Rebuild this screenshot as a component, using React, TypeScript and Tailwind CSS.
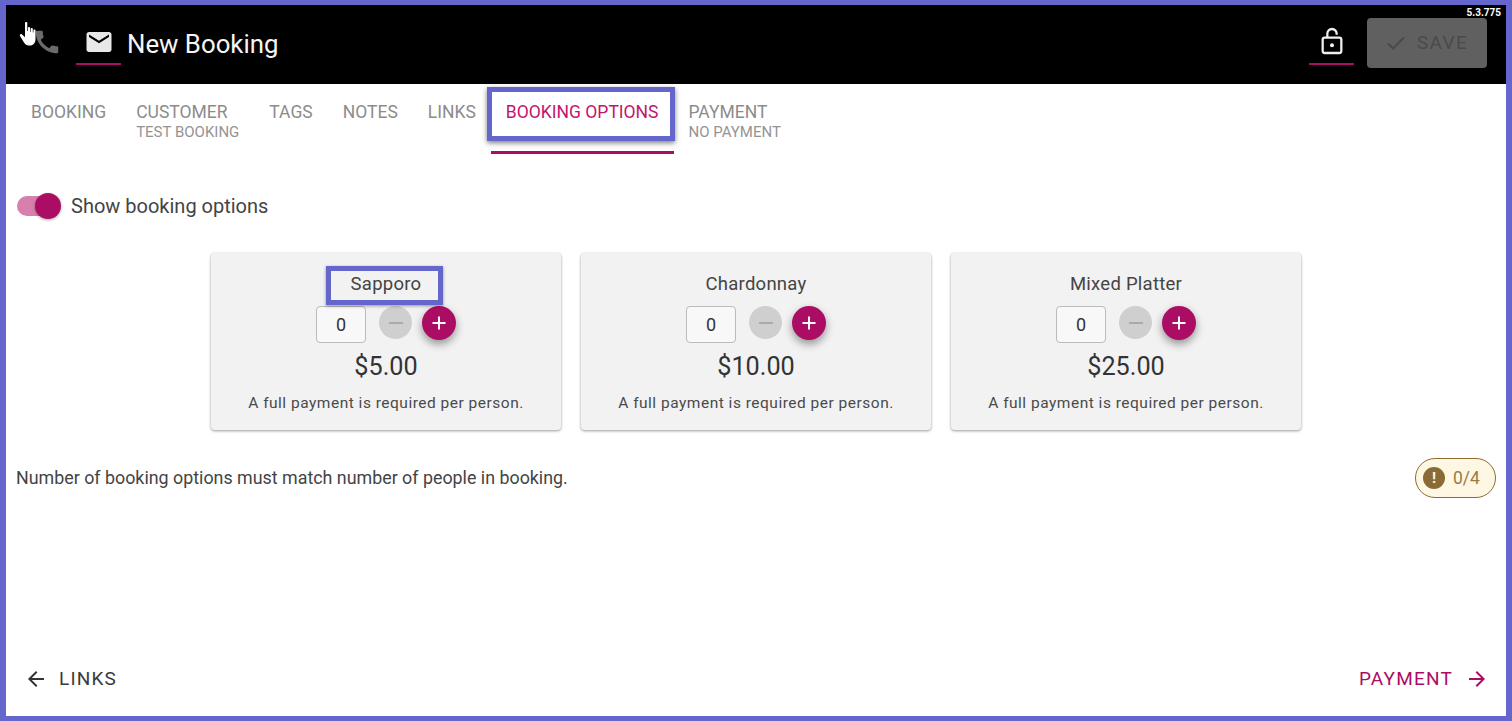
const options = [
  { name: "Sapporo", price: "$5.00", marked: true },
  { name: "Chardonnay", price: "$10.00", marked: false },
  { name: "Mixed Platter", price: "$25.00", marked: false },
];

const tabs = [
  { label: "BOOKING" },
  { label: "CUSTOMER", sub: "TEST BOOKING" },
  { label: "TAGS" },
  { label: "NOTES" },
  { label: "LINKS" },
  { label: "BOOKING OPTIONS", active: true },
  { label: "PAYMENT", sub: "NO PAYMENT" },
];

const OptionCard = ({ name, price, marked }: { name: string; price: string; marked: boolean }) => (
  <div className="w-[350px] h-[177px] bg-[#f2f2f2] rounded-[4px] shadow-[0_1px_3px_rgba(0,0,0,0.4)] flex flex-col items-center pt-[18px]">
    <div className="relative mt-[1px] text-[18.500px] leading-[24px] text-[#444] tracking-[0.25px]">
      {name}
      {marked && (
        <div className="absolute left-[-25px] right-[-22px] top-[-6px] bottom-[-9px] border-[5px] border-[#6466cc] shadow-[0_1px_3px_rgba(0,0,0,0.4)]" />
      )}
    </div>
    <div className="flex items-center mt-[9px] h-[38px]">
      <div className="w-[50px] h-[37px] bg-[#f8f8f8] border border-[#bbb] rounded-[4px] flex items-center justify-center text-[18px] text-[#333]">
        0
      </div>
      <div className="ml-[13px] w-[33px] h-[33px] rounded-full bg-[#cfcfcf] flex items-center justify-center mb-[3px]">
        <div className="w-[14px] h-[2px] bg-[#aaa]" />
      </div>
      <div className="ml-[10px] w-[34px] h-[34px] rounded-full bg-[#ab0d65] shadow-[0_4px_8px_rgba(0,0,0,0.4)] flex items-center justify-center mb-[3px]">
        <svg width="16" height="16" viewBox="0 0 16 16" fill="none" stroke="white" strokeWidth="2">
          <path d="M8 1.500v13M1.500 8h13" />
        </svg>
      </div>
    </div>
    <div className="mt-[7px] text-[25.200px] leading-[34px] text-[#333]">{price}</div>
    <div className="mt-[9px] text-[15.500px] leading-[20px] text-[#4a4a4a] tracking-[0.5px]">
      A full payment is required per person.
    </div>
  </div>
);

export default function App() {
  return (
    <div className="w-[1512px] h-[721px] border-x-[6px] border-y-[5px] border-[#6466cc] bg-white flex flex-col font-['Roboto',sans-serif] overflow-hidden">
      {/* header */}
      <div className="relative h-[79px] shrink-0 bg-black flex items-center">
        <div className="relative ml-[26px] mt-[-5px] w-[30px] h-[30px]">
          <svg width="30" height="30" viewBox="0 0 24 24" fill="#6b6b6b">
            <path d="M20.010 15.380c-1.230 0-2.420-.2-3.530-.56a.98.98 0 0 0-1.010.24l-1.570 1.970c-2.830-1.350-5.480-3.900-6.890-6.830l1.950-1.660c.27-.28.35-.67.24-1.020-.37-1.110-.56-2.300-.56-3.530 0-.54-.45-.99-.99-.99H4.190C3.650 3 3 3.240 3 3.990 3 13.280 10.730 21 20.010 21c.71 0 .99-.63.99-1.180v-3.450c0-.54-.45-.99-.99-.99z" />
          </svg>
          <svg className="absolute left-[-13px] top-[-6px]" width="22" height="26" viewBox="0 0 22 26" fill="white">
            <path d="M6 2c0-1.300 2.300-1.300 2.300 0v8h.7V7c0-1.200 2.100-1.200 2.100 0v4h.6V8c0-1.200 2.100-1.200 2.100 0v3.500h.6V9.500c0-1.200 2.100-1.200 2.100 0V18c0 4-2.300 6.500-5.500 6.500H10c-2.500 0-3.700-1.300-5-3L1 15c-.8-1.300.8-2.700 2-1.600l3 2.800z" />
          </svg>
        </div>
        <div className="relative ml-[14px] mt-[-4px] w-[45px] flex justify-center">
          <svg className="mt-[-1px]" width="30" height="30" viewBox="0 0 24 24" fill="#e8e8e8">
            <path d="M20 4H4c-1.100 0-2 .9-2 2v12c0 1.100.9 2 2 2h16c1.100 0 2-.9 2-2V6c0-1.100-.9-2-2-2zm0 4-8 5-8-5V6l8 5 8-5v2z" />
          </svg>
          <div className="absolute left-0 right-0 top-[35px] h-[2px] bg-[#ab0d65]" />
        </div>
        <div className="ml-[6px] text-[25.800px] text-[#f5f5f5] leading-none">New Booking</div>
        <div className="relative ml-auto mt-[-4px] w-[45px] flex justify-center">
          <svg className="ml-[1px] mt-[-3px]" width="32" height="32" viewBox="0 0 24 24" fill="none" stroke="#f0f0f0" strokeWidth="1.700">
            <rect x="5" y="9.500" width="14" height="11.500" rx="1.500" />
            <path d="M8.500 9.500V6.500a3.500 3.500 0 0 1 7 0v.8" />
            <circle cx="12" cy="15.200" r="1.500" fill="#f0f0f0" stroke="none" />
          </svg>
          <div className="absolute left-0 right-0 top-[35px] h-[2px] bg-[#ab0d65]" />
        </div>
        <div className="ml-[13px] mr-[19px] mt-[-3px] w-[120px] h-[50px] rounded-[4px] bg-[#606060] flex items-center justify-center gap-[9px] pr-[2px] text-[#4a4a4a] text-[19px] tracking-[1.300px]">
          <svg width="24" height="24" viewBox="0 0 24 24" fill="none" stroke="#4a4a4a" strokeWidth="2">
            <path d="M4 12.500l5 5L20 6.500" />
          </svg>
          SAVE
        </div>
        <div className="absolute right-[5px] top-[2px] text-[10px] leading-[12px] font-bold text-white">5.3.775</div>
      </div>

      {/* tabs */}
      <div className="h-[70px] shrink-0 flex pl-[10px]">
        {tabs.map((tab) => (
          <div
            key={tab.label}
            className={`relative px-[15px] pt-[17px] h-full text-[17.500px] leading-[22px] ${
              tab.active ? "text-[#c2156d] border-b-[3px] border-[#ab0d65]" : "text-[#8c8c8c]"
            }`}
          >
            {tab.label}
            {tab.sub && <div className="text-[15px] leading-[18px] text-[#949494]">{tab.sub}</div>}
            {tab.active && (
              <div className="absolute left-[-4px] right-[-1px] top-[3px] h-[54px] border-[5px] border-[#6466cc] shadow-[0_2px_5px_rgba(0,0,0,0.5)]" />
            )}
          </div>
        ))}
      </div>

      {/* body */}
      <div className="flex-1 flex flex-col px-[10px]">
        <div className="flex items-center mt-[37px] h-[30px]">
          <div className="relative w-[45px] h-[30px] flex items-center">
            <div className="absolute left-[1px] w-[36px] h-[20px] rounded-full bg-[#d97fae]" />
            <div className="absolute left-[19px] w-[26px] h-[26px] rounded-full bg-[#ab0d65] shadow-[0_1px_3px_rgba(0,0,0,0.35)]" />
          </div>
          <div className="ml-[10px] text-[20px] text-[#444]">Show booking options</div>
        </div>

        <div className="flex justify-center gap-[20px] mt-[32px]">
          {options.map((option) => (
            <OptionCard key={option.name} {...option} />
          ))}
        </div>

        <div className="flex items-center justify-between mt-[27px] h-[42px]">
          <div className="text-[17.850px] text-[#444]">Number of booking options must match number of people in booking.</div>
          <div className="w-[81px] h-[40px] rounded-full bg-[#fdf7e3] border border-[#8f6b31] flex items-center pl-[7px] gap-[8px] text-[17.500px] text-[#9a7a45]">
            <div className="w-[22px] h-[22px] rounded-full bg-[#8a6a35] flex items-center justify-center text-[#fdf7e3] text-[15px] font-bold leading-none">
              !
            </div>
            0/4
          </div>
        </div>

        <div className="mt-auto mb-[23px] flex items-center justify-between pr-[7px]">
          <div className="flex items-center gap-[11px] pl-[8px] text-[19px] tracking-[1.150px] text-[#3a3a3a]">
            <svg width="24" height="24" viewBox="0 0 24 24" fill="#333">
              <path d="M20 11H7.830l5.590-5.590L12 4l-8 8 8 8 1.410-1.410L7.830 13H20v-2z" />
            </svg>
            LINKS
          </div>
          <div className="flex items-center gap-[12px] text-[19px] tracking-[1.200px] text-[#ab0d65]">
            PAYMENT
            <svg width="24" height="24" viewBox="0 0 24 24" fill="#ab0d65">
              <path d="M12 4l-1.410 1.410L16.170 11H4v2h12.170l-5.580 5.590L12 20l8-8z" />
            </svg>
          </div>
        </div>
      </div>
    </div>
  );
}
